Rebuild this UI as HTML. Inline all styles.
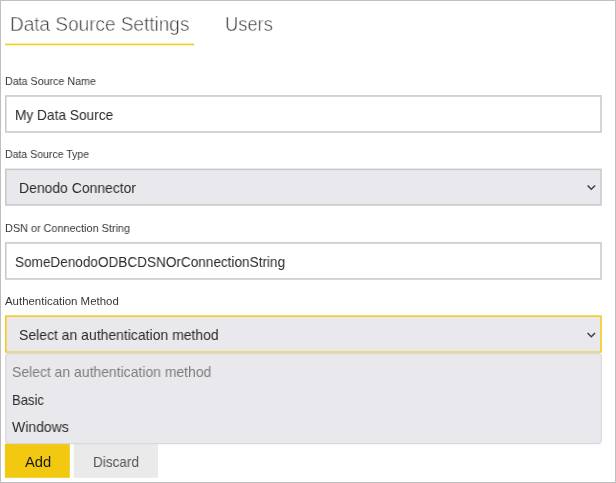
<!DOCTYPE html>
<html>
<head>
<meta charset="utf-8">
<title>Data Source Settings</title>
<style>
*{box-sizing:border-box;margin:0;padding:0}
html,body{width:616px;height:483px;background:#fff;overflow:hidden}
body{position:relative;font-family:"Liberation Sans",Arial,sans-serif;color:#333}
.frame{position:absolute;left:0;top:0;width:616px;height:483px;border:1px solid #bfbfbf}
.bg{position:absolute;left:0;top:0}
.t{position:absolute;white-space:nowrap;transform-origin:0 0;line-height:1;will-change:transform}
.title{font-size:20px;color:#444;-webkit-text-stroke:0.45px #fff}
.lbl{font-size:11px;color:#363636}
.val{font-size:14.2px;color:#2b2b2b}
</style>
</head>
<body>
<svg class="bg" width="616" height="483" viewBox="0 0 616 483">
<rect x="5" y="43.6" width="189" height="1.7" fill="#f3cc24"/>
<rect x="5.81" y="95.95" width="595.19" height="36.00" fill="#fff" stroke="#c7c7c7" stroke-width="1.5"/>
<rect x="5.81" y="169.35" width="595.19" height="35.60" fill="#e9e9ed" stroke="#c7c7c7" stroke-width="1.5"/>
<path d="M587.55 185.45 L591.30 189.20 L595.05 185.45" fill="none" stroke="#404040" stroke-width="1.55"/>
<rect x="5.81" y="242.95" width="595.19" height="36.00" fill="#fff" stroke="#c7c7c7" stroke-width="1.5"/>
<rect x="5.81" y="316.15" width="595.19" height="35.80" fill="#e9e9ed" stroke="#f2c811" stroke-width="1.5"/>
<rect x="6.6" y="351.1" width="593.6" height="1.6" fill="#f0dc85"/>
<path d="M587.55 332.95 L591.30 336.70 L595.05 332.95" fill="none" stroke="#404040" stroke-width="1.55"/>
<rect x="4.9" y="443.7" width="64.9" height="34.1" fill="#f2c811"/>
<rect x="73.7" y="443.7" width="84.3" height="34.1" fill="#eaeaea"/>
<rect x="5.7" y="353.3" width="595.6" height="90.4" rx="3" ry="3" fill="#e9e9ed" stroke="#d2d2da" stroke-width="1"/>
</svg>
<div class="frame"></div>
<div class="t title" id="t1" style="left:9.51px;top:14px;transform:scaleX(0.9490);">Data Source Settings</div>
<div class="t title" id="t2" style="left:224.81px;top:14px;transform:scaleX(0.9160);">Users</div>
<div class="t lbl" id="l1" style="left:5.23px;top:76px;transform:scaleX(0.9710);">Data Source Name</div>
<div class="t val" id="v1" style="left:14.59px;top:108px;transform:scaleX(0.9659);">My Data Source</div>
<div class="t lbl" id="l2" style="left:5.23px;top:149px;transform:scaleX(0.9575);">Data Source Type</div>
<div class="t val" id="v2" style="left:18.89px;top:181px;transform:scaleX(0.9827);">Denodo Connector</div>
<div class="t lbl" id="l3" style="left:5.22px;top:223px;transform:scaleX(0.9875);">DSN or Connection String</div>
<div class="t val" id="v3" style="left:15.00px;top:255px;transform:scaleX(0.9565);">SomeDenodoODBCDSNOrConnectionString</div>
<div class="t lbl" id="l4" style="left:5.12px;top:296px;transform:scaleX(1.0391);">Authentication Method</div>
<div class="t val" id="v4" style="left:19.19px;top:328px;transform:scaleX(0.9851);">Select an authentication method</div>
<div class="t val" id="b1" style="left:24.55px;top:455px;transform:scaleX(1.0397);color:#1a1a1a">Add</div>
<div class="t val" id="b2" style="left:92.99px;top:455px;transform:scaleX(0.9552);color:#555">Discard</div>
<div class="t val" id="o1" style="left:12.49px;top:365px;transform:scaleX(0.9832);color:#7d7d7d">Select an authentication method</div>
<div class="t val" id="o2" style="left:11.51px;top:393px;transform:scaleX(0.9222);">Basic</div>
<div class="t val" id="o3" style="left:11.76px;top:420px;transform:scaleX(0.9864);">Windows</div>
</body>
</html>
